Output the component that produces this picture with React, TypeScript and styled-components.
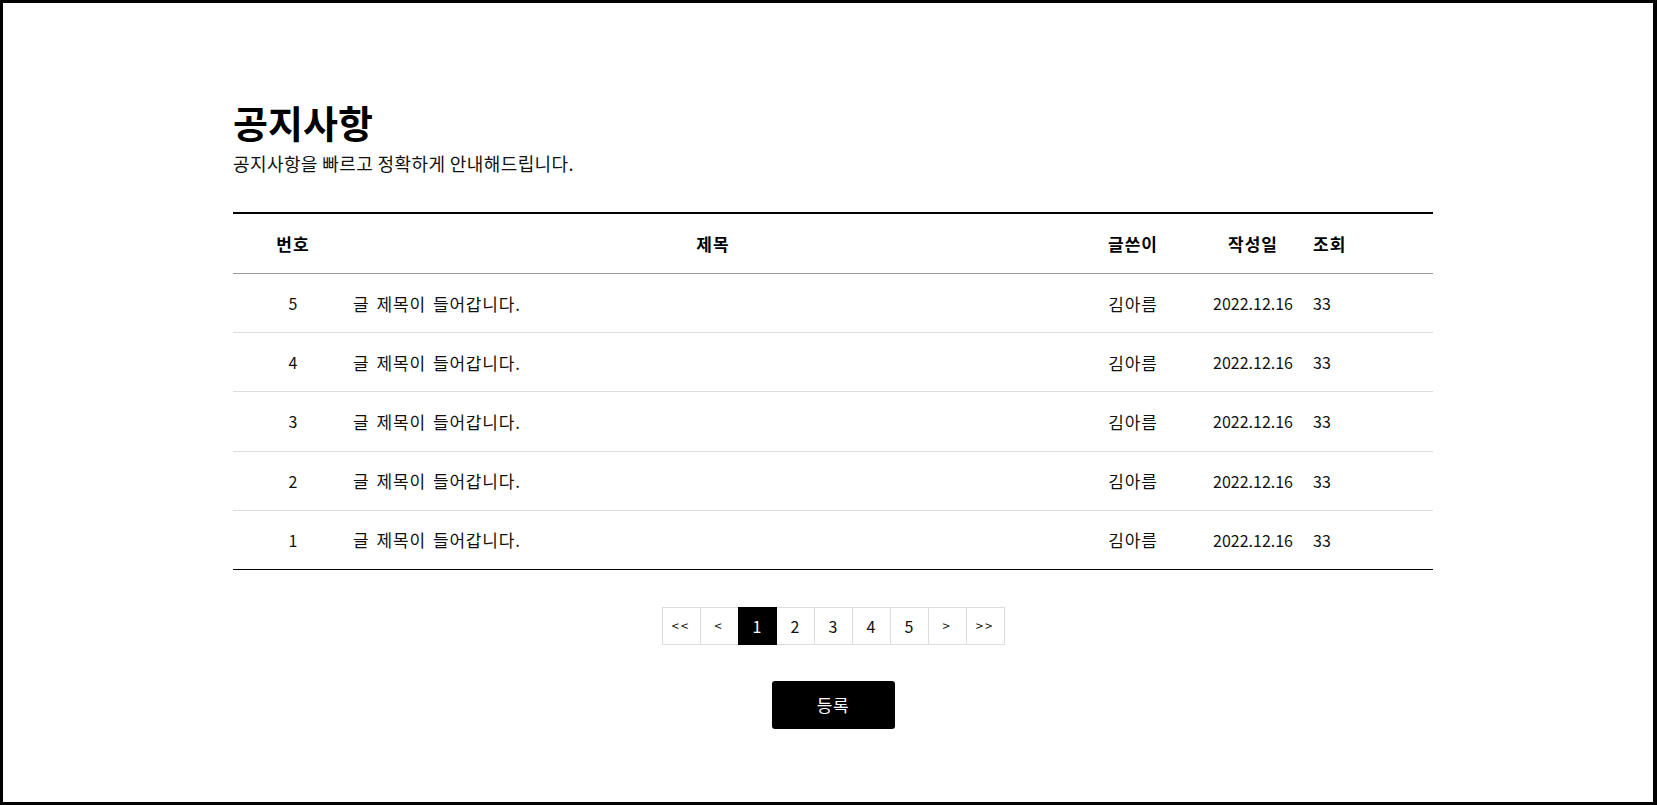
import React from "react";
import styled, { createGlobalStyle, css } from "styled-components";

const GlobalStyle = createGlobalStyle`
  html, body {
    margin: 0;
    padding: 0;
    background: #fff;
  }
  body {
    font-family: "Noto Sans CJK KR", "Noto Sans", sans-serif;
    color: #111;
  }
  * { box-sizing: border-box; }
`;

const Frame = styled.div`
  height: 100vh;
  border: 3px solid #000;
  border-right-width: 4px;
  padding: 100px 0 0 10px;
`;

const Page = styled.main`
  width: 1200px;
  margin: 0 auto;
`;

const Title = styled.h2`
  margin: 0;
  font-size: 38px;
  line-height: 38px;
  font-weight: 700;
  color: #000;
`;

const Subtitle = styled.p`
  margin: 10px 0 0;
  font-size: 18px;
  line-height: 25px;
  letter-spacing: 0.4px;
  color: #111;
`;

const Board = styled.div`
  margin-top: 36px;
  border-top: 2px solid #000;
`;

const COLS = "120px 720px 120px 120px 120px";

const HeadRow = styled.div`
  display: grid;
  grid-template-columns: ${COLS};
  align-items: center;
  height: 60px;
  border-bottom: 1px solid #9a9a9a;
`;

const Row = styled.div`
  display: grid;
  grid-template-columns: ${COLS};
  align-items: center;
  height: 59.2px;
  border-bottom: 1px solid #dddddd;
  &:last-child {
    border-bottom-color: #000;
  }
`;

const HeadCell = styled.div<{ $align?: "left" | "center" }>`
  font-size: 17px;
  font-weight: 700;
  letter-spacing: 1px;
  color: #000;
  text-align: ${(p) => p.$align ?? "center"};
`;

const Cell = styled.div<{ $align?: "left" | "center"; $hangul?: boolean }>`
  font-size: ${(p) => (p.$hangul ? "17px" : "16px")};
  letter-spacing: ${(p) => (p.$hangul ? "0.8px" : "0")};
  word-spacing: ${(p) => (p.$hangul ? "2.5px" : "0")};
  color: #111;
  text-align: ${(p) => p.$align ?? "center"};
`;

const Pager = styled.nav`
  display: flex;
  justify-content: center;
  margin-top: 37px;
`;

const PageButton = styled.button<{ $active?: boolean; $arrow?: boolean }>`
  width: 39px;
  height: 38px;
  padding: 0;
  margin: 0;
  border: 1px solid #dddddd;
  background: #fff;
  color: #111;
  font-family: inherit;
  font-size: ${(p) => (p.$arrow ? "13px" : "16px")};
  letter-spacing: ${(p) => (p.$arrow ? "2px" : "0")};
  cursor: pointer;
  & + & {
    margin-left: -1px;
  }
  ${(p) =>
    p.$active &&
    css`
      background: #000;
      border-color: #000;
      color: #fff;
      position: relative;
    `}
`;

const Actions = styled.div`
  display: flex;
  justify-content: center;
  margin-top: 36px;
`;

const WriteButton = styled.button`
  width: 123px;
  height: 48px;
  border: none;
  border-radius: 3px;
  background: #000;
  color: #fff;
  font-family: inherit;
  font-size: 17px;
  letter-spacing: 0.5px;
  cursor: pointer;
`;

const posts = [5, 4, 3, 2, 1].map((n) => ({
  no: n,
  title: "글 제목이 들어갑니다.",
  author: "김아름",
  date: "2022.12.16",
  views: 33,
}));

export default function App() {
  return (
    <>
      <GlobalStyle />
      <Frame>
        <Page>
          <Title>공지사항</Title>
          <Subtitle>공지사항을 빠르고 정확하게 안내해드립니다.</Subtitle>
          <Board>
            <HeadRow>
              <HeadCell>번호</HeadCell>
              <HeadCell>제목</HeadCell>
              <HeadCell>글쓴이</HeadCell>
              <HeadCell>작성일</HeadCell>
              <HeadCell $align="left">조회</HeadCell>
            </HeadRow>
            {posts.map((p) => (
              <Row key={p.no}>
                <Cell>{p.no}</Cell>
                <Cell $align="left" $hangul>
                  {p.title}
                </Cell>
                <Cell $hangul>{p.author}</Cell>
                <Cell>{p.date}</Cell>
                <Cell $align="left">{p.views}</Cell>
              </Row>
            ))}
          </Board>
          <Pager>
            <PageButton $arrow>&lt;&lt;</PageButton>
            <PageButton $arrow>&lt;</PageButton>
            {[1, 2, 3, 4, 5].map((n) => (
              <PageButton key={n} $active={n === 1}>
                {n}
              </PageButton>
            ))}
            <PageButton $arrow>&gt;</PageButton>
            <PageButton $arrow>&gt;&gt;</PageButton>
          </Pager>
          <Actions>
            <WriteButton>등록</WriteButton>
          </Actions>
        </Page>
      </Frame>
    </>
  );
}
